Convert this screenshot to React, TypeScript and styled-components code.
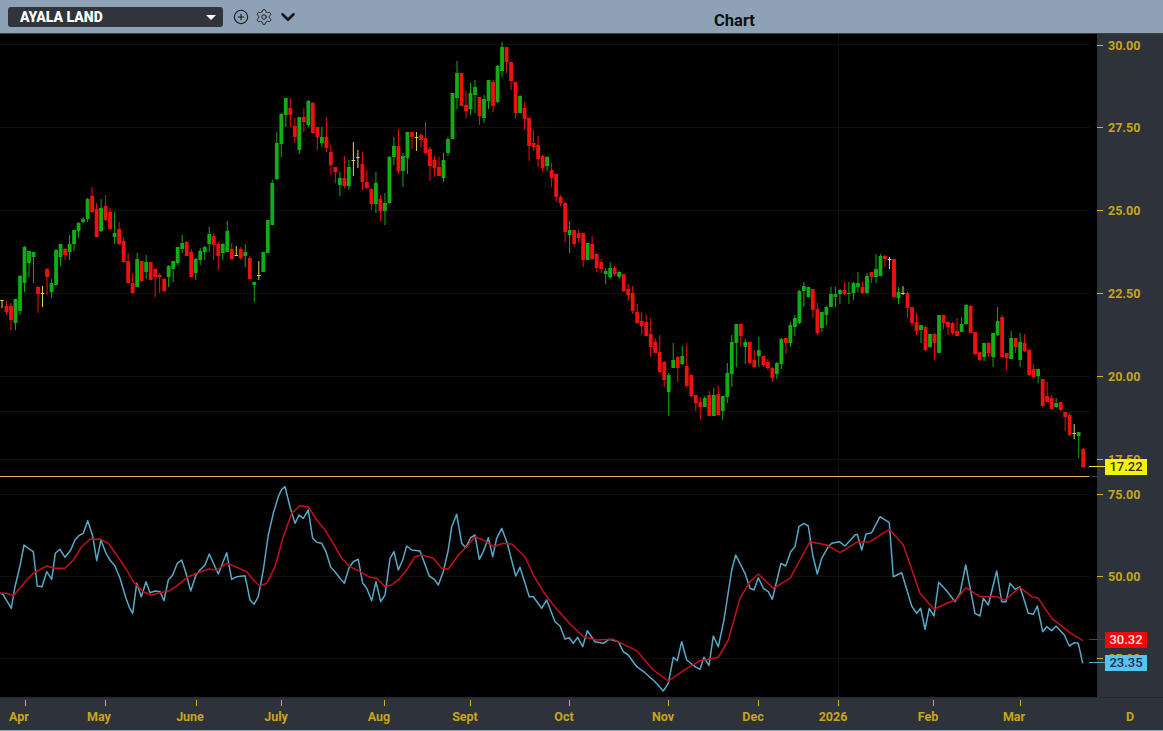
import React from "react";
import styled, { createGlobalStyle } from "styled-components";
import { CirclePlus, Settings, ChevronDown } from "lucide-react";

const GlobalStyle = createGlobalStyle`
  html, body { margin: 0; padding: 0; background: #2e323b; overflow: hidden; }
  * { box-sizing: border-box; }
`;

type Kind = "g" | "r" | "y";
// kind, body top, body bottom, wick top, wick bottom (page pixels)
const raw: string =
  "y300,301,300,308 r306,312,301,315 r306,320,303,330 g299,323,299,330 g276,311,275,315 g247,283,246,292 g251,263,251,277 g252,257,252,283 r287,294,286,313 y293,294,286,307 " +
  "r269,277,268,295 g283,292,279,298 g250,285,249,285 g244,257,244,266 r249,255,248,260 g244,252,235,260 g230,244,230,251 g223,231,222,238 g219,222,217,223 g199,219,198,222 " +
  "r196,212,187,213 r209,237,203,237 g208,231,199,232 r206,220,195,221 r212,229,208,229 g233,237,212,244 r229,244,222,245 r241,262,237,263 r261,283,253,283 r283,293,273,294 " +
  "g259,287,253,287 r261,281,261,282 g262,272,255,279 r262,280,262,280 r269,277,268,297 r275,277,273,293 r279,291,278,292 g266,277,265,287 g261,269,261,282 g247,263,247,265 " +
  "g243,249,235,253 r242,256,241,256 r252,277,249,277 g259,273,258,280 g251,260,248,265 g247,252,246,260 g234,244,227,252 r236,245,233,260 r244,256,242,270 g244,253,243,260 " +
  "g231,252,221,252 r249,259,243,260 y255,256,246,256 r249,258,247,260 g252,256,244,267 r258,279,256,279 g282,285,282,302 y275,276,261,280 g252,272,252,272 g220,253,220,253 " +
  "g183,225,180,225 g143,179,132,180 g114,144,113,157 g98,115,98,127 r108,115,98,127 r126,137,118,143 g117,150,117,154 r117,122,108,132 g101,125,100,127 r103,133,102,133 " +
  "r127,137,127,150 g137,143,127,147 r137,148,117,152 r152,165,145,175 r167,172,167,183 g178,185,172,196 r178,186,156,188 g167,186,160,190 y160,161,142,176 y157,158,150,168 " +
  "r164,182,152,190 r182,188,170,189 r189,204,188,210 g183,204,172,213 r199,211,195,221 g203,211,193,225 g157,203,156,204 g146,157,137,165 r146,171,129,174 g156,171,153,187 " +
  "g132,158,132,174 r132,137,132,149 y137,138,132,151 r135,140,133,147 r138,153,122,153 r149,166,147,181 r160,168,156,177 r167,176,157,176 g160,178,153,182 g139,153,137,156 " +
  "g93,139,93,139 g73,98,61,109 r73,106,73,106 r105,111,91,118 g93,109,83,115 g87,95,80,113 r97,116,97,125 g99,118,95,123 g80,101,80,109 r82,106,80,112 " +
  "g66,102,65,103 g47,71,42,77 r47,62,47,73 r62,81,62,90 r82,113,82,118 g96,113,95,113 r108,119,102,130 r118,146,118,161 r143,147,130,151 r145,159,136,167 " +
  "r156,168,155,172 g157,166,156,171 r170,178,163,187 r174,197,174,202 r197,203,195,206 r203,232,202,242 g230,235,221,253 r230,244,230,247 r233,238,230,242 r233,260,233,267 " +
  "g243,260,243,260 r244,259,236,260 r254,268,253,272 r262,269,259,273 g271,274,268,284 g268,277,262,279 r268,274,266,276 g272,277,271,279 r274,291,274,292 r289,295,284,301 " +
  "r293,311,286,314 r312,323,304,324 r321,326,312,335 r322,336,315,336 r334,347,318,357 r342,353,338,353 r352,372,335,373 r362,380,361,387 g375,392,373,416 g360,368,343,368 " +
  "r357,368,356,382 g356,364,346,365 r366,386,343,388 r375,396,374,397 r395,403,395,411 r402,407,397,419 g398,407,396,407 r395,416,391,416 g395,416,388,416 r394,415,386,415 " +
  "g396,411,396,420 g373,397,363,403 g342,374,335,387 g324,343,324,367 r324,336,324,347 g342,347,339,364 r342,363,342,364 r360,367,350,367 g350,356,337,367 r356,365,356,367 " +
  "r362,368,359,370 r368,378,367,382 g363,374,362,379 g339,364,338,369 r338,343,338,354 g325,343,322,347 g318,327,315,336 g291,323,290,324 g286,291,282,307 g287,297,287,297 " +
  "r289,310,289,318 r309,333,303,335 g312,328,312,332 g307,315,306,325 g294,307,287,307 g294,297,287,307 g290,294,289,304 r290,294,282,295 g293,294,282,304 g283,293,282,300 " +
  "g283,287,272,292 r287,293,282,294 g276,293,273,294 r272,277,272,283 g269,277,254,283 g256,276,254,276 r256,259,255,267 y259,260,257,269 r259,297,259,297 g292,298,287,304 " +
  "y293,294,286,295 r293,308,292,318 r307,323,307,326 r322,331,313,335 g325,330,325,343 r327,350,326,351 g334,347,334,348 r334,343,333,360 g315,353,315,353 r315,323,315,329 " +
  "r322,327,321,335 r323,333,322,335 r331,336,318,336 g324,332,317,332 g305,324,304,325 r306,333,305,333 r332,354,332,355 r352,360,352,361 g343,357,343,361 r343,353,342,357 " +
  "g333,357,333,367 g321,335,307,336 r317,357,315,357 r353,358,353,370 g338,359,331,359 r338,347,338,353 g342,360,333,367 r343,351,334,352 r350,375,349,376 r369,377,364,377 " +
  "g369,376,369,383 r379,406,379,407 r396,402,382,402 r398,409,395,410 g403,407,398,408 r402,410,402,411 r412,417,412,431 r415,435,413,436 y433,434,424,439 g432,436,432,458 r449,467,448,468";

const candles = raw.split(" ").map((c, i) => {
  const [t, b, w, x] = c.slice(1).split(",").map(Number);
  return { i, kind: c[0] as Kind, top: t, bottom: b, wickTop: w, wickBottom: x, x: 2 + i * 4.505 };
});

const crop = (ox: number, oy: number, list: number[]) => {
  const out: string[] = [];
  for (let k = 0; k < list.length; k += 2) {
    out.push(`${(ox + list[k] / 3).toFixed(1)},${(oy + list[k + 1] / 3).toFixed(1)}`);
  }
  return out;
};

const rsi = [
  ...crop(0, 480, [0,340,8,342,20,362,34,385,45,320,60,258,72,195,85,205,100,215,112,318,126,320,140,275,155,298,166,220,180,208,195,232,212,210,225,180,238,166,250,160,263,122,278,168,290,242,303,180,318,220,330,240,345,258,360,295,378,355,388,382,398,400,410,310,424,350,438,305,450,338,465,333,480,335,492,362,505,300,518,285,532,250,545,240,558,280,572,333,588,285,600,270,615,255,628,222,655,282,680,218,695,298,710,290,735,287,750,360,762,373,775,350,790,270,805,165,820,100,835,50,845,28,855,20,870,80,885,130,897,105,910,115,925,90,938,175,950,187,965,190,978,215,992,262,1005,275,1020,295,1033,310,1048,262,1060,245,1075,238,1088,310,1100,325,1115,362,1128,305,1142,365,1155,345,1170,235,1182,215,1195,270]),
  ...crop(400, 500, [8,180,20,138,35,150,60,153,88,228,103,238,115,255,130,215,145,150,155,80,170,43,185,130,197,143,212,113,225,105,238,178,250,155,265,113,278,170,290,115,305,85,322,130,347,228,360,202,388,290,400,290,425,325,440,300,465,365,480,378,495,417,508,413,520,430,533,412,548,440,562,392,585,425,610,430,628,418,655,425,670,455,685,465,710,500,735,518,765,545,790,573,805,550,820,472,832,482,845,425,860,480,885,500,900,508,912,472,927,497,940,408,955,440,972,360,995,210,1007,165,1035,220,1050,265,1062,270,1075,233,1090,265,1105,275,1117,298,1143,190,1157,198,1172,155,1185,140,1197,80]),
  ...crop(730, 500, [222,70,235,78,248,165,262,222,275,175,295,140,305,130,328,125,345,138,375,105,382,103,395,150,408,102,425,98,450,50,478,68,490,230,515,218,545,318,560,340,572,325,585,388,598,325,612,348,626,247,650,272,675,305,690,280,707,195,735,340,750,348,760,295,775,315,800,213,815,305,828,305,840,250,855,268,870,260,895,340,910,343,922,318,938,395,950,380,965,392,978,378,1003,405,1018,438,1033,428,1045,430,1058,490]),
].join(" ");

const signal = [
  ...crop(0, 480, [0,340,20,340,40,347,60,325,80,300,100,280,120,268,140,258,165,265,195,265,220,240,245,200,270,178,300,177,325,190,350,225,380,270,400,305,430,335,455,345,480,338,510,332,540,310,565,290,590,280,625,267,650,270,680,250,710,262,740,275,765,305,780,318,800,310,825,260,850,170,875,100,900,77,925,80,950,120,975,150,1000,190,1025,235,1050,260,1080,275,1110,292,1130,295,1155,320,1175,315]),
  ...crop(400, 500, [0,235,20,210,45,170,65,165,100,175,125,205,145,207,175,165,200,140,225,110,250,120,280,140,310,130,335,132,375,170,400,225,430,275,460,315,510,372,550,410,590,420,640,418,710,452,760,510,805,543,850,512,900,482,955,472,985,420,1020,295,1050,245,1075,222,1120,265,1170,235]),
  ...crop(730, 500, [210,180,240,125,290,135,330,158,380,127,420,125,478,88,520,135,570,280,612,328,650,310,680,298,707,263,750,290,800,290,825,300,870,262,905,290,925,295,965,355,1020,398,1058,422]),
].join(" ");

const gridRows = [44, 127, 210, 293, 376, 411, 459, 494, 576, 658];
const gridCols = [838];
const ticks = [
  { y: 45, label: "30.00" }, { y: 127, label: "27.50" }, { y: 210, label: "25.00" },
  { y: 293, label: "22.50" }, { y: 376, label: "20.00" }, { y: 459, label: "17.50" },
  { y: 494, label: "75.00" }, { y: 576, label: "50.00" }, { y: 658, label: "25.00" },
];
const tags = [
  { y: 467, label: "17.22", bg: "#f4f400", fg: "#33361a", lead: "#e8e020" },
  { y: 640, label: "30.32", bg: "#f50505", fg: "#ffe9e9", lead: "#b01818" },
  { y: 663, label: "23.35", bg: "#55c4f2", fg: "#123049", lead: "#5aa5c4" },
];
const months = [
  { x: 19, t: 24.5, label: "Apr" }, { x: 99, t: 105, label: "May" }, { x: 190, t: 195.5, label: "June" },
  { x: 276, t: 281, label: "July" }, { x: 379, t: 384, label: "Aug" }, { x: 465, t: 470, label: "Sept" },
  { x: 564, t: 569, label: "Oct" }, { x: 663, t: 668, label: "Nov" }, { x: 753, t: 758, label: "Dec" },
  { x: 833, t: 838, label: "2026" }, { x: 928, t: 933, label: "Feb" }, { x: 1014, t: 1020, label: "Mar" },
  { x: 1130, t: null, label: "D" },
];

const COLORS: Record<Kind, string> = { g: "#0fae12", r: "#f01010", y: "#e4d64a" };

const Page = styled.div`
  width: 1163px;
  height: 731px;
  display: flex;
  flex-direction: column;
  font-family: Roboto, "Liberation Sans", sans-serif;
`;
const Header = styled.header`
  position: relative;
  height: 34px;
  flex: none;
  display: flex;
  align-items: flex-start;
  padding: 7px 0 0 8px;
  background: #8fa1b4;
  border-bottom: 1px solid #39404a;
`;
const Selector = styled.div`
  width: 215px;
  height: 20px;
  display: flex;
  align-items: center;
  justify-content: space-between;
  padding: 0 7px 0 12px;
  background: #2f353b;
  border-radius: 3px;
  color: #fff;
  font-size: 14px;
  font-weight: 900;
`;
const Caret = styled.span`
  width: 0;
  height: 0;
  border-left: 5px solid transparent;
  border-right: 5px solid transparent;
  border-top: 5px solid #fff;
`;
const Tools = styled.div`
  display: flex;
  align-items: center;
  gap: 6px;
  height: 20px;
  margin-left: 2px;
  padding-left: 8px;
  color: #15191e;
`;
const Chevron = styled(ChevronDown)`
  margin-left: -2px;
`;
const Title = styled.h1`
  position: absolute;
  left: 0;
  right: 0;
  top: 12px;
  margin: 0;
  padding-left: 306px;
  text-align: center;
  font-size: 16.5px;
  line-height: 18px;
  font-weight: 700;
  color: #0c0f12;
`;
const Body = styled.main`
  flex: 1;
  display: grid;
  grid-template-columns: 1097px 66px;
  grid-template-rows: 663px 34px;
  background: #2e323b;
`;
const Plot = styled.svg`
  display: block;
  width: 1097px;
  height: 663px;
  background: #000;
`;
const PriceAxis = styled.aside`
  position: relative;
  background: #2e323b;
`;
const Tick = styled.div`
  position: absolute;
  left: 0;
  height: 14px;
  margin-top: -7px;
  display: flex;
  align-items: center;
  gap: 5px;
  color: #c9a618;
  font-size: 12.5px;
  font-weight: 700;
  &::before {
    content: "";
    width: 6px;
    height: 1px;
    background: #d6ae20;
  }
`;
const Tag = styled.div<{ $bg: string; $fg: string; $lead: string }>`
  position: absolute;
  left: 8px;
  width: 42px;
  height: 16px;
  margin-top: -8px;
  background: ${(p) => p.$bg};
  color: ${(p) => p.$fg};
  font-size: 13px;
  font-weight: 500;
  line-height: 16px;
  text-align: center;
  &::before {
    content: "";
    position: absolute;
    left: -16px;
    top: 7px;
    width: 16px;
    height: 1px;
    background: ${(p) => p.$lead};
  }
`;
const TimeAxis = styled.footer`
  position: relative;
  grid-column: 1 / span 2;
  background: #2e323b;
  border-top: 1px solid #25282f;
  border-bottom: 1px solid #8fa1b4;
`;
const MonthTick = styled.span`
  position: absolute;
  top: 2px;
  width: 1px;
  height: 6px;
  background: #d6ae20;
`;
const Month = styled.span`
  position: absolute;
  top: 12px;
  transform: translateX(-50%);
  color: #c9a618;
  font-size: 12.5px;
  line-height: 14px;
  font-weight: 700;
`;

export default function App() {
  return (
    <Page>
      <GlobalStyle />
      <Header>
        <Selector>
          AYALA LAND
          <Caret />
        </Selector>
        <Tools>
          <CirclePlus size={16} strokeWidth={1.6} />
          <Settings size={18} strokeWidth={1.2} />
          <Chevron size={22} strokeWidth={2.8} />
        </Tools>
        <Title>Chart</Title>
      </Header>
      <Body>
        <Plot viewBox="0 34 1097 663" role="img" aria-label="Candlestick and RSI chart">
          {gridRows.map((y) => (
            <line key={y} x1={0} x2={1090} y1={y + 0.5} y2={y + 0.5} stroke="#101010" />
          ))}
          {gridCols.map((x) => (
            <line key={x} x1={x + 0.5} x2={x + 0.5} y1={34} y2={697} stroke="#0e0e0e" />
          ))}
          {candles.map((c) => (
            <g key={c.i} stroke={COLORS[c.kind]} fill={COLORS[c.kind]}>
              <line x1={c.x} x2={c.x} y1={c.wickTop} y2={c.wickBottom} strokeWidth={1} />
              {c.kind === "y" ? (
                <line x1={c.x - 1.8} x2={c.x + 1.8} y1={c.top + 0.5} y2={c.top + 0.5} strokeWidth={1} />
              ) : (
                <rect x={c.x - 1.9} y={c.top} width={3.8} height={Math.max(c.bottom - c.top, 1)} stroke="none" />
              )}
            </g>
          ))}
          <rect x={1089} y={476} width={8} height={1} fill="#3a3a3a" />
          <rect x={0} y={476} width={1089} height={1} fill="#e7b65c" />
          <polyline points={rsi} fill="none" stroke="#58a9c6" strokeWidth={1.5} strokeLinejoin="round" />
          <polyline points={signal} fill="none" stroke="#c4101c" strokeWidth={1.5} strokeLinejoin="round" />
        </Plot>
        <PriceAxis>
          {ticks.map((t) => (
            <Tick key={`${t.y}`} style={{ top: t.y - 34 }}>
              {t.label}
            </Tick>
          ))}
          {tags.map((t) => (
            <Tag key={t.label} $bg={t.bg} $fg={t.fg} $lead={t.lead} style={{ top: t.y - 34 }}>
              {t.label}
            </Tag>
          ))}
        </PriceAxis>
        <TimeAxis>
          {months.map((m) => (
            <React.Fragment key={m.label}>
              {m.t !== null && <MonthTick style={{ left: m.t }} />}
              <Month style={{ left: m.x }}>{m.label}</Month>
            </React.Fragment>
          ))}
        </TimeAxis>
      </Body>
    </Page>
  );
}
